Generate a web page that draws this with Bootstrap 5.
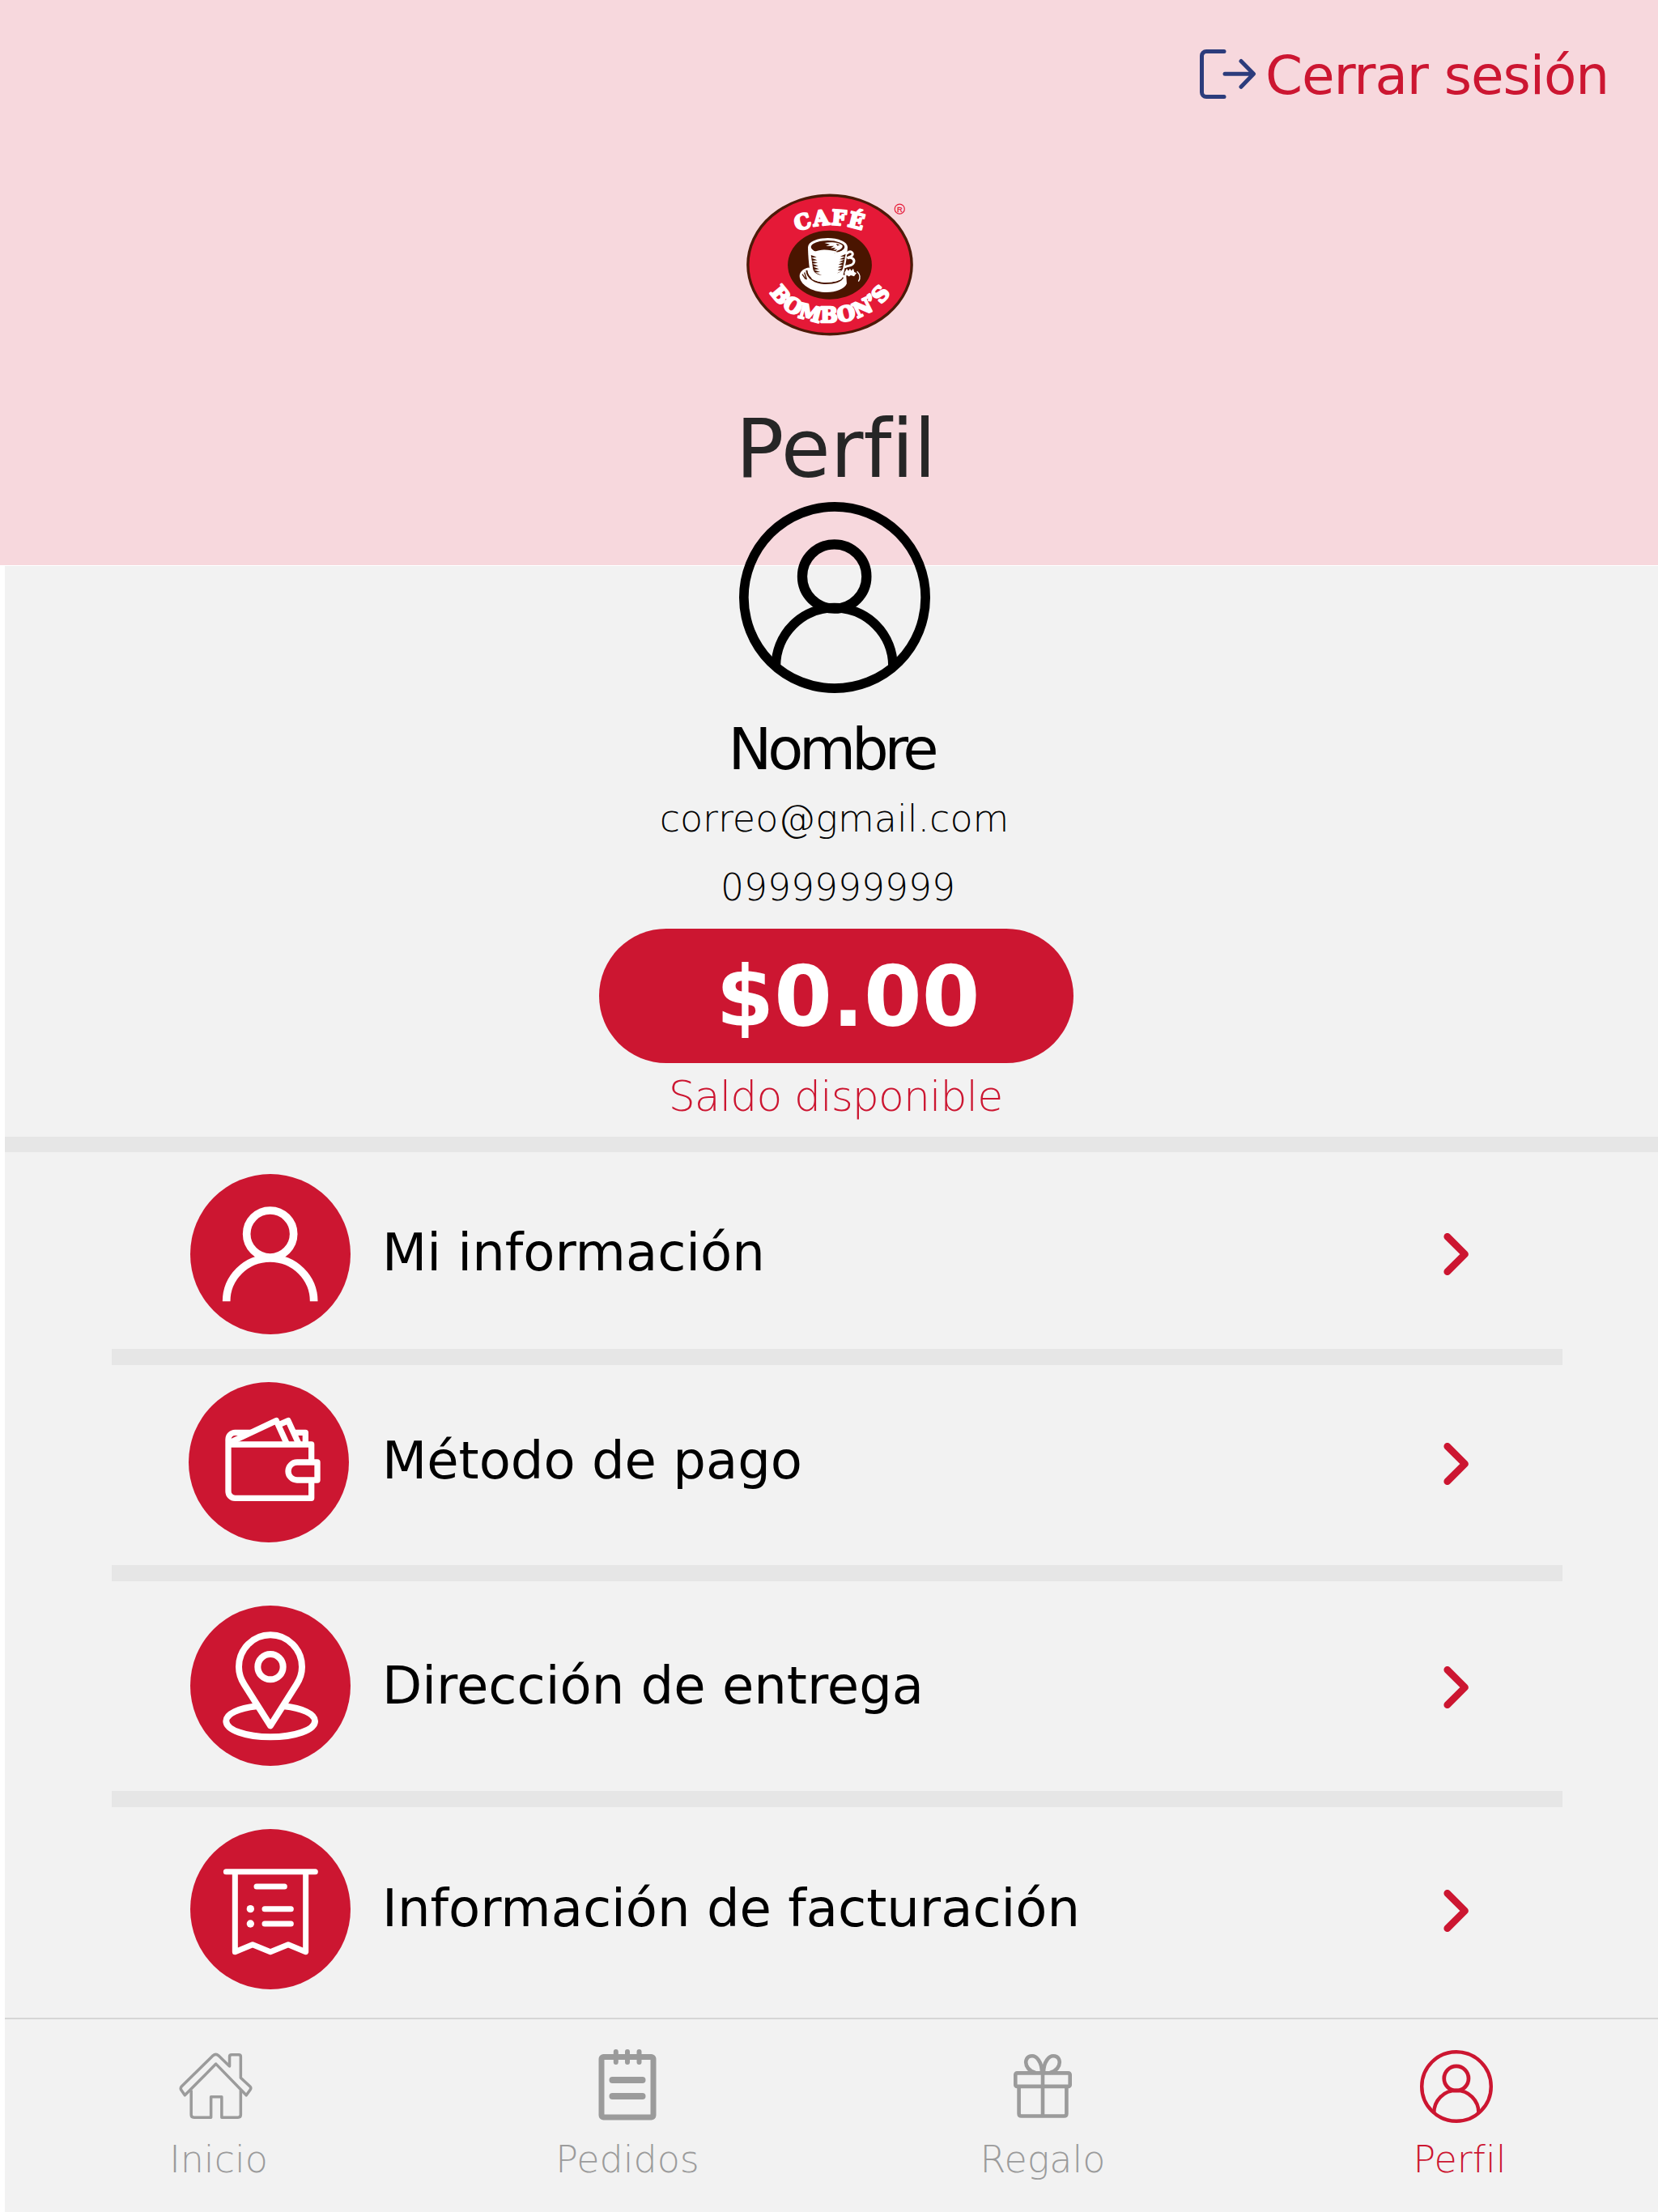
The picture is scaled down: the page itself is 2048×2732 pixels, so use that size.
<!DOCTYPE html>
<html lang="es">

<head>
    <meta charset="UTF-8">
    <meta name="viewport" content="width=device-width, initial-scale=1.0">
    <title>Perfil - Café Bombon's</title>
    <link href="https://cdn.jsdelivr.net/npm/bootstrap@5.3.0/dist/css/bootstrap.min.css" rel="stylesheet">
    <style>
        :root {
            --rojo: #cc1631;
            --gris: #9b9b9b;
        }

        body {
            font-family: "DejaVu Sans", sans-serif;
            background-color: #ffffff;
            color: #000;
        }

        svg {
            display: block;
            flex-shrink: 0;
        }

        .pantalla {
            width: 2048px;
            height: 2732px;
        }

        /* Header */
        .cabecera {
            height: 698px;
            padding-top: 54px;
            background-color: #f7d8dd;
        }

        .cerrar-sesion {
            width: 566px;
            height: 80px;
            gap: 11px;
            color: var(--rojo);
            font-size: 66px;
            line-height: 80px;
            letter-spacing: -1.1px;
        }

        .cerrar-sesion svg {
            margin-top: 7px;
        }

        .logo {
            margin-top: 105px;
            padding-left: 1px;
        }

        .titulo {
            margin: 80px 0 0;
            padding-left: 17px;
            color: #262626;
            font-size: 99px;
            font-weight: 400;
            line-height: 120px;
        }

        /* Profile summary */
        .contenido {
            margin: 1px 0 0 6px;
            background-color: #f2f2f2;
        }

        .resumen {
            height: 705px;
            margin-left: -6px;
        }

        .avatar {
            margin-top: -79px;
            padding-left: 14px;
        }

        .nombre {
            margin: 24px 0 0;
            padding-left: 6px;
            font-size: 72px;
            font-weight: 400;
            line-height: 90px;
            letter-spacing: -5.2px;
        }

        .dato {
            margin: 11px 0 0;
            font-size: 46px;
            font-weight: 200;
            line-height: 60px;
        }

        .correo {
            padding-left: 13px;
        }

        .telefono {
            margin-top: 26px;
            padding-left: 22px;
            font-size: 45.6px;
        }

        .saldo {
            width: 586px;
            height: 166px;
            margin: 20px 0 0 18px;
            padding-left: 29px;
            background-color: var(--rojo);
            font-size: 103px;
            line-height: 169px;
        }

        .saldo-texto {
            margin: 6px 0 0;
            padding-left: 16px;
            color: var(--rojo);
            font-size: 52px;
            font-weight: 200;
            line-height: 70px;
            letter-spacing: -0.9px;
        }

        .separador {
            height: 19px;
            background-color: #e6e6e6;
        }

        /* Options */
        .opcion {
            margin: 0 118px 0 132px;
            padding: 27px 115px 0 97px;
            border-bottom: 20px solid #e6e6e6;
            height: 263px;
            font-size: 64px;
            line-height: 80px;
        }

        .opcion .texto {
            margin: -4px 0 0 39px;
        }

        .opcion .circulo {
            width: 198px;
            height: 198px;
            fill: none;
            stroke: #fff;
        }

        .opcion-pago {
            height: 267px;
            padding-top: 21px;
            padding-left: 95px;
        }

        .opcion-pago .texto {
            margin-left: 41px;
        }

        .opcion-entrega {
            height: 279px;
            padding-top: 30px;
        }

        .opcion-entrega .texto {
            margin-top: -1px;
        }

        .opcion-factura {
            height: 260px;
            border-bottom: 0;
        }

        .opcion-factura .texto {
            margin-top: -2px;
        }

        /* Bottom menu */
        .menu {
            height: 240px;
            padding: 37px 0 0 144px;
            border-top: 2px solid #d6d6d6;
            font-size: 46px;
            font-weight: 200;
            line-height: 60px;
        }

        .menu a {
            width: 240px;
            color: var(--gris);
        }

        .menu a svg {
            margin-bottom: 14px;
            fill: none;
            stroke: currentColor;
        }

        .menu .pedidos {
            margin-left: 265px;
        }

        .menu .regalo {
            margin-left: 273px;
        }

        .menu .perfil {
            margin-left: 275px;
            color: var(--rojo);
        }

        .menu .inicio svg,
        .menu .perfil svg {
            margin-right: 6px;
        }
    </style>
</head>

<body>
    <!-- Shared drawings -->
    <svg width="0" height="0" class="position-absolute">
        <symbol id="persona" viewBox="0 0 708 708">
            <g fill="none" stroke="currentColor" stroke-width="35">
                <circle cx="354" cy="354" r="336.5" />
                <circle cx="353" cy="276" r="119" stroke-width="37" />
                <path d="M136 615v-6a217 217 0 0 1 434 0v6" />
            </g>
        </symbol>
        <symbol id="flecha" viewBox="0 0 32 52">
            <path d="M4.800 4.300L26.500 26L4.800 47.700" fill="none" stroke="#cc1631" stroke-width="8.800"
                stroke-linecap="round" stroke-linejoin="round" />
        </symbol>
    </svg>

    <div class="pantalla d-flex flex-column overflow-hidden">
        <!-- Header -->
        <header class="cabecera">
            <a href="#" class="cerrar-sesion d-flex align-items-start ms-auto text-decoration-none text-nowrap">
                <svg width="70" height="61" viewBox="0 0 70 61" fill="none" stroke="#2c3c7c" stroke-width="5"
                    stroke-linecap="round" stroke-linejoin="round">
                    <path d="M30 2.500H8a5.500 5.500 0 0 0-5.500 5.500v45a5.500 5.500 0 0 0 5.500 5.500h22" />
                    <path d="M31 30.300h35M51 14.500l15.500 15.800L51 46.300" />
                </svg>
                <span>Cerrar sesión</span>
            </a>

            <div class="logo d-flex justify-content-center">
                <svg width="206" height="176" viewBox="0 0 615 523">
                    <ellipse cx="307.500" cy="261.500" rx="302" ry="256" fill="#e51937" stroke="#4d1a08" stroke-width="10" />
                    <ellipse cx="307.500" cy="262" rx="155" ry="127" fill="#4a1500" />
                    <path id="arcoSup" d="M186 139Q310 89 442 139" fill="none" />
                    <path id="arcoInf" d="M87 363C172 514 446 514 540 352" fill="none" />
                    <g fill="#fff" stroke="#fff" stroke-width="7" stroke-linejoin="round"
                        font-family="DejaVu Serif, serif" font-weight="700">
                        <text font-size="76"><textPath href="#arcoSup" textLength="246">CAFÉ</textPath></text>
                        <text font-size="76"><textPath href="#arcoInf" textLength="518">BOMBON’S</textPath></text>
                    </g>
                    <!-- saucer -->
                    <path d="M228 272c-25 6-35 22-31 38 7 30 50 53 98 53 37 0 66-12 75-32l-2-30z" fill="#fff" />
                    <path d="M222 282c2 28 31 48 70 48 32 0 56-7 64-22" fill="none" stroke="#4a1500" stroke-width="6" />
                    <path d="M214 290l8 26M206 296l12 18" stroke="#4a1500" stroke-width="4" />
                    <!-- cup -->
                    <path d="M227 194c0 40 5 85 12 115 7 22 104 22 115 0 9-32 18-75 19-115z" fill="#fff" />
                    <path d="M238 226l21 7-20 3 22 8-20 3 22 8-20 3 22 8-19 3 22 8-19 3 23 8-18 2 24 10c-24-3-31-14-33-26z"
                        fill="#4a1500" />
                    <path d="M366 222l-20 9 18 1-20 9 18 1-20 9 16 1-19 9 17 1-19 9 16 2-17 9 16 1-18 10c15-4 20-11 22-20z"
                        fill="#4a1500" />
                    <ellipse cx="300" cy="195" rx="72" ry="32" fill="#fff" />
                    <ellipse cx="300" cy="196" rx="62" ry="24" fill="#4a1500" />
                    <path d="M288 181c26-6 55-1 66 9 3 10-10 18-27 23l8-8-15 2 9-8-19 1 13-8-30 1 15-6z" fill="#fff" />
                    <path d="M250 214c27-12 57-8 87 0-30 13-62 12-87 0z" fill="#fff" />
                    <path d="M331 184l14 4-10 3z" fill="#4a1500" />
                    <!-- handle and spoon -->
                    <path d="M372 219c12-12 25-1 18 8-4 6-12 5-18 10 18-5 28 5 24 16-4 13-20 11-31 16" fill="none"
                        stroke="#fff" stroke-width="9" stroke-linecap="round" />
                    <path d="M362 290l8-14 6 8 6-8 5 8 7-8 4 12 8 4-9 12-12-4-7 5-7-5-8 4z" fill="#fff" />
                    <path d="M408 286c12 12 13 25 5 37" fill="none" stroke="#fff" stroke-width="4" />
                    <!-- registered mark -->
                    <circle cx="565" cy="56" r="18" fill="none" stroke="#e51937" stroke-width="3.500" />
                    <text x="565.500" y="66" text-anchor="middle" font-family="Liberation Sans, sans-serif" font-size="28"
                        fill="#e51937" stroke="#e51937" stroke-width="1">R</text>
                </svg>
            </div>

            <h1 class="titulo text-center">Perfil</h1>
        </header>

        <main class="contenido flex-grow-1 d-flex flex-column">
            <!-- Profile summary -->
            <section class="resumen d-flex flex-column align-items-center">
                <div class="avatar">
                    <svg width="236" height="236"><use href="#persona" /></svg>
                </div>
                <h2 class="nombre">Nombre</h2>
                <p class="dato correo">correo@gmail.com</p>
                <p class="dato telefono">0999999999</p>
                <div class="saldo rounded-pill text-white text-center fw-bold">$0.00</div>
                <p class="saldo-texto">Saldo disponible</p>
            </section>
            <div class="separador"></div>

            <!-- Options -->
            <div class="opcion d-flex align-items-start">
                <div class="d-flex align-items-center w-100">
                    <svg class="circulo" viewBox="0 0 594 594" stroke-width="29">
                        <circle cx="297" cy="297" r="297" fill="#cc1631" stroke="none" />
                        <circle cx="296" cy="222" r="87" />
                        <path d="M134 472a162 160 0 0 1 324 0" />
                    </svg>
                    <span class="texto">Mi información</span>
                    <svg class="ms-auto" width="32" height="52"><use href="#flecha" /></svg>
                </div>
            </div>

            <div class="opcion opcion-pago d-flex align-items-start">
                <div class="d-flex align-items-center w-100">
                    <svg class="circulo" viewBox="0 0 594 594" stroke-width="22" stroke-linejoin="round">
                        <circle cx="297" cy="297" r="297" fill="#cc1631" stroke="none" />
                        <path d="M230 187h-58a25 25 0 0 0-25 25v193a25 25 0 0 0 25 25h283v-60M455 297v-66H150" />
                        <path d="M157 222l168-79 40 88M335 158l34-15 40 88M390 187h43v44" />
                        <path d="M477 297h-75a33 33 0 0 0 0 66h75z" />
                    </svg>
                    <span class="texto">Método de pago</span>
                    <svg class="ms-auto mt-1" width="32" height="52"><use href="#flecha" /></svg>
                </div>
            </div>

            <div class="opcion opcion-entrega d-flex align-items-start">
                <div class="d-flex align-items-center w-100">
                    <svg class="circulo" viewBox="0 0 594 594" stroke-width="24" stroke-linejoin="round">
                        <circle cx="297" cy="297" r="297" fill="#cc1631" stroke="none" />
                        <path d="M297 445L200 292c-14-22-20-42-20-65a117 118 0 0 1 234 0c0 23-6 43-20 65z" />
                        <circle cx="297" cy="227" r="47" />
                        <path d="M246 373c-66 7-113 28-113 55 0 33 74 59 164 59s165-26 165-59c0-27-48-48-114-55" />
                    </svg>
                    <span class="texto">Dirección de entrega</span>
                    <svg class="ms-auto mt-1" width="32" height="52"><use href="#flecha" /></svg>
                </div>
            </div>

            <div class="opcion opcion-factura d-flex align-items-start">
                <div class="d-flex align-items-center w-100">
                    <svg class="circulo" viewBox="0 0 594 594" stroke-width="21" stroke-linecap="round"
                        stroke-linejoin="round">
                        <circle cx="297" cy="297" r="297" fill="#cc1631" stroke="none" />
                        <path d="M133 158h330M166 158v297l65-27 66 27 66-27 65 27V158" />
                        <path d="M246 213h103M276 296h97M276 351h97" />
                        <g fill="#fff" stroke="none">
                            <circle cx="223" cy="296" r="14" />
                            <circle cx="223" cy="351" r="14" />
                        </g>
                    </svg>
                    <span class="texto">Información de facturación</span>
                    <svg class="ms-auto mt-1" width="32" height="52"><use href="#flecha" /></svg>
                </div>
            </div>

            <!-- Bottom menu -->
            <nav class="menu d-flex mt-auto">
                <a href="#" class="inicio d-flex flex-column align-items-center text-decoration-none">
                    <svg width="92" height="92" viewBox="-0.500 -0.500 94 94" stroke-width="3.600" stroke-linejoin="round">
                        <path d="M42.500 7.500L2.800 46.500Q1.200 48.300 2.200 50.500L7 57.500L46.200 18L84.500 57.500L89.500 50.500Q91 48.300 89.300 46.500L77.500 35.500V9Q77.500 6.500 75 6.500H66Q63.400 6.500 63.400 9V21L49.500 7.500Q46 4.500 42.500 7.500Z" />
                        <path d="M15 51v31q0 3.500 3.500 3.500h21.500V59.500h13.500v26H74q3.500 0 3.500-3.500V51" />
                    </svg>
                    Inicio
                </a>
                <a href="#" class="pedidos d-flex flex-column align-items-center text-decoration-none">
                    <svg width="92" height="92" viewBox="0 0 92 92" stroke-width="7" stroke-linecap="round">
                        <rect x="14" y="9.500" width="64" height="74.500" rx="2.500" />
                        <path d="M31.800 3v13M46 3v13M60.500 3v13" stroke-width="6" />
                        <path d="M27.500 38h37M27.500 58h37" stroke-width="8" />
                    </svg>
                    Pedidos
                </a>
                <a href="#" class="regalo d-flex flex-column align-items-center text-decoration-none">
                    <svg width="92" height="92" viewBox="0 0 92 92" stroke-width="4.600">
                        <rect x="12.300" y="29.400" width="67.400" height="16.500" rx="2" />
                        <path d="M16.600 46v33.500q0 3 3 3h52.800q3 0 3-3V46M46 29v53" />
                        <path d="M45 29C45 15 38 8.300 33 8.300C25 8.300 23 17 28 23.500Q31 27.500 37 29M47 29C47 15 54 8.300 59 8.300C67 8.300 69 17 64 23.500Q61 27.500 55 29" />
                    </svg>
                    Regalo
                </a>
                <a href="#" class="perfil d-flex flex-column align-items-center text-decoration-none">
                    <svg width="92" height="92"><use href="#persona" x="0" y="1" width="90" height="90" /></svg>
                    Perfil
                </a>
            </nav>
        </main>
    </div>

    <script src="https://cdn.jsdelivr.net/npm/bootstrap@5.3.0/dist/js/bootstrap.bundle.min.js"></script>
</body>

</html>
